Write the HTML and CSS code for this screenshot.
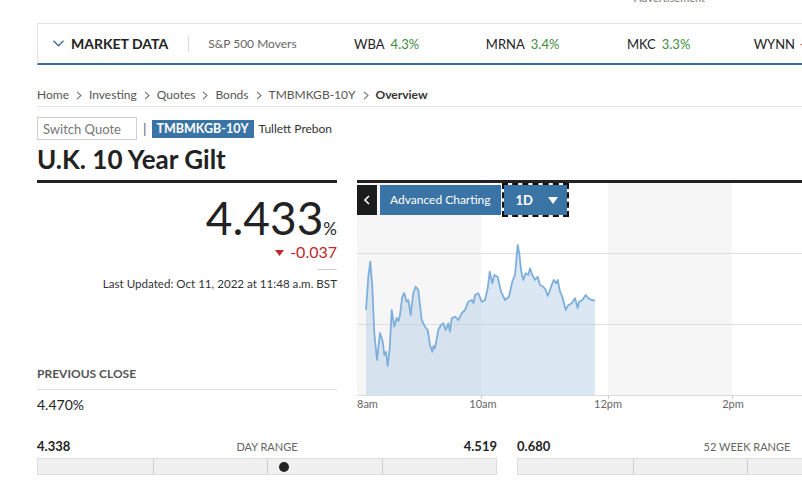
FILE: index.html
```html
<!DOCTYPE html>
<html lang="en">
<head>
<meta charset="utf-8">
<title>U.K. 10 Year Gilt</title>
<link rel="stylesheet" href="styles.css">
</head>
<body>
<div class="ad"><span>Advertisement</span></div>
<div class="page">
  <nav class="market-bar">
    <div class="md-toggle">
      <svg class="md-chev" width="11" height="7" viewBox="0 0 11 7"><path d="M0.5 0.8 L5.5 5.8 L10.5 0.8" fill="none" stroke="#3d6a96" stroke-width="1.3"/></svg>
      <span>MARKET DATA</span>
    </div>
    <div class="md-sep"></div>
    <div class="movers">S&amp;P 500 Movers</div>
    <div class="tickers">
      <div class="ticker"><span>WBA</span><span class="up">4.3%</span></div>
      <div class="ticker"><span>MRNA</span><span class="up">3.4%</span></div>
      <div class="ticker"><span>MKC</span><span class="up">3.3%</span></div>
      <div class="ticker wide"><span>WYNN</span><span class="down">-3.1%</span></div>
    </div>
  </nav>

  <div class="crumbs">
    <span>Home</span><svg class="sep" width="6" height="9" viewBox="0 0 6 9"><path d="M1 0.8 L5 4.5 L1 8.2" fill="none" stroke="#777" stroke-width="1.1"/></svg>
    <span>Investing</span><svg class="sep" width="6" height="9" viewBox="0 0 6 9"><path d="M1 0.8 L5 4.5 L1 8.2" fill="none" stroke="#777" stroke-width="1.1"/></svg>
    <span>Quotes</span><svg class="sep" width="6" height="9" viewBox="0 0 6 9"><path d="M1 0.8 L5 4.5 L1 8.2" fill="none" stroke="#777" stroke-width="1.1"/></svg>
    <span>Bonds</span><svg class="sep" width="6" height="9" viewBox="0 0 6 9"><path d="M1 0.8 L5 4.5 L1 8.2" fill="none" stroke="#777" stroke-width="1.1"/></svg>
    <span>TMBMKGB-10Y</span><svg class="sep" width="6" height="9" viewBox="0 0 6 9"><path d="M1 0.8 L5 4.5 L1 8.2" fill="none" stroke="#777" stroke-width="1.1"/></svg>
    <b>Overview</b>
  </div>

  <div class="quote-row">
    <div class="switch">Switch Quote</div>
    <span class="pipe">|</span>
    <span class="badge">TMBMKGB-10Y</span>
    <span class="exchange">Tullett Prebon</span>
  </div>

  <h1 class="title">U.K. 10 Year Gilt</h1>

  <div class="main">
    <section class="left">
      <div class="price">4.433<small>%</small></div>
      <div class="change"><svg class="tri" width="9" height="6" viewBox="0 0 9 6"><path d="M0 0 H9 L4.5 6 Z" fill="#c0282d"/></svg>-0.037</div>
      <div class="rule"></div>
      <div class="updated">Last Updated: Oct 11, 2022 at 11:48 a.m. BST</div>
      <div class="prev-head">PREVIOUS CLOSE</div>
      <div class="prev-val">4.470%</div>
    </section>

    <section class="chart">
      <svg class="plot" width="620" height="231" viewBox="357 183 620 231">
        <rect x="357" y="183" width="124" height="212" fill="#f6f6f6"/>
        <rect x="608" y="183" width="124" height="212" fill="#f6f6f6"/>
        <line x1="357" y1="253.5" x2="977" y2="253.5" stroke="#dedede" stroke-width="1"/>
        <line x1="357" y1="324.5" x2="977" y2="324.5" stroke="#dedede" stroke-width="1"/>
        <path fill="rgba(170,200,228,0.42)" d="M366,310 L368.3,276.7 L370.3,261.7 L372.3,286.7 L374.3,333 L377,360 L380,333 L382.3,340 L383.3,346 L384.3,355 L386,352 L387.7,366 L389.7,348 L391.7,310 L394.3,326.7 L396.7,318 L398.5,321 L400,315 L402.3,296.7 L404.3,293 L406.7,301.7 L408.3,300 L410.7,315 L413.3,293 L415.7,286.7 L418.3,290 L421.7,320 L425,326.7 L427.7,330 L430,345 L432.3,351.7 L433.5,346 L435,348.3 L438.3,330 L441,325 L443.3,323.3 L445.7,330 L448.3,323.3 L450,331.7 L451.7,318.3 L455,316.7 L458.3,320 L461.7,313.3 L465,310 L468.3,301.7 L471.7,300 L473.5,303 L475,295 L478.3,293.3 L481.7,301.7 L485,300 L487.7,288.3 L489.7,271.7 L492.3,283.3 L494.3,275 L497.7,276.7 L501,291.7 L505,300 L509,296.7 L512.3,281.7 L515,275 L517.7,245 L519.3,253.3 L521,270 L523.3,280 L525.7,273.3 L528.3,275 L530,268.3 L532.3,275 L535,280 L537.7,276.7 L540,285 L543.3,286.7 L545.7,290 L547.7,296 L550,290 L551.7,285 L553.7,280 L556,283.3 L557.7,280 L560,291.7 L562.3,296.7 L565.7,310 L568.3,305 L571.7,303.3 L575,298.3 L577.7,308.3 L579,301.7 L582.3,300 L585.7,295 L588.3,298.3 L591.7,300 L595,300.7 L595,395 L366,395 Z"/>
        <path fill="none" stroke="#7eafdc" stroke-width="1.8" stroke-linejoin="round" d="M366,310 L368.3,276.7 L370.3,261.7 L372.3,286.7 L374.3,333 L377,360 L380,333 L382.3,340 L383.3,346 L384.3,355 L386,352 L387.7,366 L389.7,348 L391.7,310 L394.3,326.7 L396.7,318 L398.5,321 L400,315 L402.3,296.7 L404.3,293 L406.7,301.7 L408.3,300 L410.7,315 L413.3,293 L415.7,286.7 L418.3,290 L421.7,320 L425,326.7 L427.7,330 L430,345 L432.3,351.7 L433.5,346 L435,348.3 L438.3,330 L441,325 L443.3,323.3 L445.7,330 L448.3,323.3 L450,331.7 L451.7,318.3 L455,316.7 L458.3,320 L461.7,313.3 L465,310 L468.3,301.7 L471.7,300 L473.5,303 L475,295 L478.3,293.3 L481.7,301.7 L485,300 L487.7,288.3 L489.7,271.7 L492.3,283.3 L494.3,275 L497.7,276.7 L501,291.7 L505,300 L509,296.7 L512.3,281.7 L515,275 L517.7,245 L519.3,253.3 L521,270 L523.3,280 L525.7,273.3 L528.3,275 L530,268.3 L532.3,275 L535,280 L537.7,276.7 L540,285 L543.3,286.7 L545.7,290 L547.7,296 L550,290 L551.7,285 L553.7,280 L556,283.3 L557.7,280 L560,291.7 L562.3,296.7 L565.7,310 L568.3,305 L571.7,303.3 L575,298.3 L577.7,308.3 L579,301.7 L582.3,300 L585.7,295 L588.3,298.3 L591.7,300 L595,300.7"/>
        <line x1="357" y1="395.5" x2="977" y2="395.5" stroke="#dcdcdc" stroke-width="1"/>
        <line x1="481.5" y1="395" x2="481.5" y2="399" stroke="#ccc"/>
        <line x1="608.5" y1="395" x2="608.5" y2="399" stroke="#ccc"/>
        <line x1="732.5" y1="395" x2="732.5" y2="399" stroke="#ccc"/>
        <line x1="857.5" y1="395" x2="857.5" y2="399" stroke="#ccc"/>
        <g class="axis">
          <text x="357" y="408">8am</text>
          <text x="483" y="408" text-anchor="middle">10am</text>
          <text x="608" y="408" text-anchor="middle">12pm</text>
          <text x="733" y="408" text-anchor="middle">2pm</text>
          <text x="858" y="408" text-anchor="middle">4pm</text>
        </g>
      </svg>
      <div class="chart-tools">
        <div class="back"><svg width="6" height="10" viewBox="0 0 6 10"><path d="M5 1 L1 5 L5 9" fill="none" stroke="#fff" stroke-width="1.6"/></svg></div>
        <div class="adv">Advanced Charting</div>
        <div class="period"><span>1D</span><svg width="10" height="7" viewBox="0 0 10 7"><path d="M0 0 H10 L5 7 Z" fill="#fff"/></svg></div>
      </div>
    </section>
  </div>

  <div class="ranges">
    <div class="range">
      <div class="range-labels"><span class="val">4.338</span><span class="lbl">DAY RANGE</span><span class="val">4.519</span></div>
      <div class="bar"><i></i><i></i><i></i><i></i><span class="dot" style="left: 53.7%"></span></div>
    </div>
    <div class="range">
      <div class="range-labels"><span class="val">0.680</span><span class="lbl">52 WEEK RANGE</span><span class="val">4.637</span></div>
      <div class="bar"><i></i><i></i><i></i><i></i><span class="dot" style="left: 95.7%"></span></div>
    </div>
  </div>
</div>
</body>
</html>
```

FILE: styles.css
```css
html, body {
  margin: 0;
  padding: 0;
  overflow: hidden;
}
body {
  width: 802px;
  height: 487px;
  background: #fff;
  color: #222;
  font-family: Lato, "Open Sans", "Liberation Sans", sans-serif;
}

.ad {
  display: flex;
  height: 23px;
  padding-left: 634px;
  font-size: 11px;
  line-height: 13px;
  color: #777;
}
.ad span { margin-top: -9px; }

.page {
  width: 940px;
  margin-left: 37px;
}

/* market data strip */
.market-bar {
  display: flex;
  align-items: center;
  height: 39px;
  border-top: 1px solid #e3e3e3;
  border-left: 1px solid #e3e3e3;
  border-bottom: 2px solid #3a6c9c;
  white-space: nowrap;
}
.md-toggle {
  display: flex;
  align-items: center;
  gap: 7px;
  padding-left: 15px;
  font-size: 14px;
  font-weight: 700;
  color: #222;
}
.md-sep {
  width: 1px;
  height: 17px;
  background: #ddd;
  margin-left: 20px;
}
.movers {
  margin-left: 19px;
  font-size: 12px;
  color: #666;
}
.tickers {
  display: flex;
  margin-left: 22px;
}
.ticker {
  width: 136px;
  display: flex;
  justify-content: center;
  gap: 6px;
  font-size: 13px;
  color: #222;
}
.ticker.wide {
  justify-content: flex-start;
  padding-left: 27px;
  gap: 5px;
}
.up { color: #3f8b3f; }
.down { color: #c0282d; }

/* breadcrumbs */
.crumbs {
  display: flex;
  align-items: center;
  gap: 7px;
  margin-top: 20px;
  line-height: 20px;
  padding-bottom: 1px;
  border-bottom: 1px solid #e3e3e3;
  font-size: 12px;
  color: #555;
}
.crumbs b { color: #333; font-weight: 700; }

/* switch quote row */
.quote-row {
  display: flex;
  align-items: center;
  margin-top: 10px;
  height: 23px;
}
.switch {
  box-sizing: border-box;
  width: 100px;
  height: 23px;
  border: 1px solid #d0d0d0;
  padding-left: 5px;
  display: flex;
  align-items: center;
  font-size: 13px;
  color: #777;
}
.pipe {
  margin: 0 5px 0 6px;
  color: #666;
  font-size: 14px;
}
.badge {
  height: 18px;
  line-height: 18px;
  padding: 0 5px;
  background: #3a74a6;
  color: #fff;
  font-size: 12.5px;
  font-weight: 700;
}
.exchange {
  margin-left: 5px;
  font-size: 12px;
  color: #333;
}

.title {
  margin: 5px 0 7px;
  font-size: 26px;
  line-height: 28px;
  font-weight: 700;
  color: #222;
}

/* main area */
.main {
  display: grid;
  grid-template-columns: 300px 620px;
  gap: 20px;
}
.left { border-top: 3px solid #222; }
.chart {
  position: relative;
  border-top: 3px solid #222;
}

.price {
  margin-top: 11px;
  text-align: right;
  font-size: 46px;
  line-height: 48px;
  color: #222;
}
.price small {
  font-size: 17px;
  line-height: 0;
}
.change {
  text-align: right;
  font-size: 16px;
  line-height: 20px;
  color: #c0282d;
}
.tri { margin-right: 6px; vertical-align: 2px; }
.rule {
  width: 20px;
  height: 1px;
  background: #ccc;
  margin: 7px 0 0 auto;
}
.updated {
  margin-top: 6px;
  text-align: right;
  font-size: 11.6px;
  line-height: 16px;
  color: #333;
}
.prev-head {
  margin-top: 74px;
  padding-bottom: 7px;
  border-bottom: 1px solid #ddd;
  font-size: 12px;
  line-height: 16px;
  font-weight: 700;
  color: #555;
}
.prev-val {
  margin-top: 6px;
  font-size: 14px;
  line-height: 18px;
  color: #222;
}

.plot { display: block; }
.axis text {
  font-family: Lato, "Open Sans", sans-serif;
  font-size: 11px;
  fill: #666;
}

.chart-tools {
  position: absolute;
  top: 2px;
  left: 0;
  display: flex;
  gap: 3px;
  height: 30px;
}
.back {
  width: 20px;
  background: #1c1c1c;
  display: flex;
  align-items: center;
  justify-content: center;
}
.adv {
  padding: 0 10px;
  line-height: 30px;
  background: #3a74a6;
  color: #fff;
  font-size: 12px;
}
.period {
  box-sizing: border-box;
  width: 63px;
  padding: 0 9px 0 12px;
  display: flex;
  align-items: center;
  justify-content: space-between;
  background: #3a74a6;
  color: #fff;
  font-size: 13px;
  font-weight: 700;
  outline: 2px dashed #111;
}

/* ranges */
.ranges {
  display: grid;
  grid-template-columns: 460px 460px;
  gap: 20px;
  margin-top: 24px;
}
.range-labels {
  display: flex;
  justify-content: space-between;
  align-items: baseline;
  line-height: 16px;
}
.range-labels .val {
  font-size: 13px;
  font-weight: 700;
  color: #222;
}
.range-labels .lbl {
  font-size: 11px;
  color: #666;
}
.bar {
  position: relative;
  margin-top: 3px;
  height: 15px;
  border: 1px solid #ddd;
  background: #f0f0f0;
  display: grid;
  grid-template-columns: repeat(4, 1fr);
}
.bar i { border-left: 1px solid #ccc; }
.bar i:first-child { border-left: 0; }
.dot {
  position: absolute;
  top: 50%;
  width: 10px;
  height: 10px;
  margin: -5px 0 0 -5px;
  border-radius: 50%;
  background: #222;
}
```
